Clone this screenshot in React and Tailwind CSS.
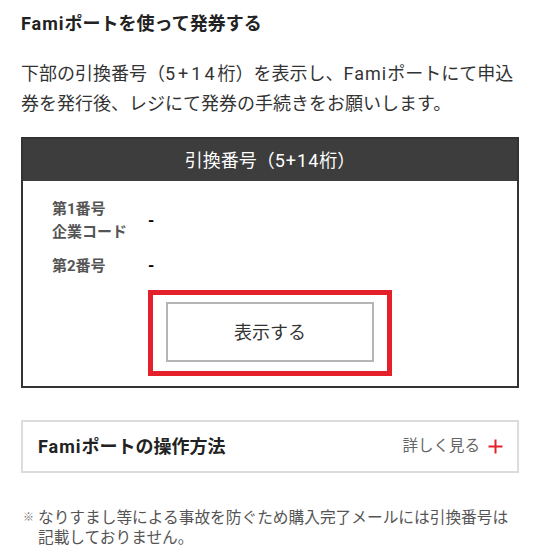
import React from "react";

export default function App() {
  const font = { fontFamily: '"Roboto", "Noto Sans CJK JP", sans-serif' };
  return (
    <div className="w-[540px] h-[557px] bg-white overflow-hidden px-[21px]" style={font}>
      <h2 className="pt-[10px] text-[18px] leading-[27px] font-bold text-[#222]">
        <span className="tracking-[1px]">Fami</span>ポートを使って発券する
      </h2>
      <p className="mt-[22px] text-[18px] leading-[30px] text-[#333] whitespace-nowrap">
        下部の引換番号（<span className="tracking-[3px]">5+14</span>桁）を表示し、<span className="tracking-[1px]">Fami</span>ポートにて申込
        <br />
        券を発行後、レジにて発券の手続きをお願いします。
      </p>

      <div className="mt-[18px] border-2 border-[#333]">
        <div className="h-[42px] bg-[#3d3d3d] flex items-center justify-center text-white text-[18px]">
          引換番号（<span className="tracking-[1px]">5+14</span>桁）
        </div>
        <div className="pt-[17px] pb-[10px]">
          <div className="flex items-center">
            <div className="w-[125px] pl-[29px] text-[15px] leading-[23px] font-bold text-[#555]">
              第1番号<br />企業コード
            </div>
            <div className="text-[16px] text-black font-bold">-</div>
          </div>
          <div className="flex items-center mt-[10px]">
            <div className="w-[125px] pl-[29px] text-[15px] leading-[23px] font-bold text-[#555]">
              第2番号
            </div>
            <div className="text-[16px] text-black font-bold">-</div>
          </div>
          <div className="flex justify-center mt-[12px]">
            <div className="w-[244px] h-[86px] border-[5px] border-[#e4202a] pt-[7px] px-[13px]">
              <button className="w-full h-[60px] border-2 border-[#b5b5b5] bg-white text-[18px] text-[#333]" style={font}>
                表示する
              </button>
            </div>
          </div>
        </div>
      </div>

      <div className="mt-[32px] h-[53px] border-2 border-[#dcdcdc] flex items-center justify-between pl-[15px] pr-[14px]">
        <span className="text-[18px] font-bold text-[#222]">
          <span className="tracking-[1px]">Fami</span>ポートの操作方法
        </span>
        <span className="flex items-center text-[15.5px] text-[#666]">
          詳しく見る
          <svg className="ml-[8px]" width="15" height="15" viewBox="0 0 15 15">
            <path d="M7.5 0.5V14.5M0.5 7.5H14.5" stroke="#e4202a" strokeWidth="2" />
          </svg>
        </span>
      </div>

      <div className="mt-[35px] flex text-[15.7px] leading-[20px] text-[#555]">
        <span className="w-[17px] shrink-0 text-[11px] text-[#777] pl-[2px]">※</span>
        <p>なりすまし等による事故を防ぐため購入完了メールには引換番号は記載しておりません。</p>
      </div>
    </div>
  );
}
